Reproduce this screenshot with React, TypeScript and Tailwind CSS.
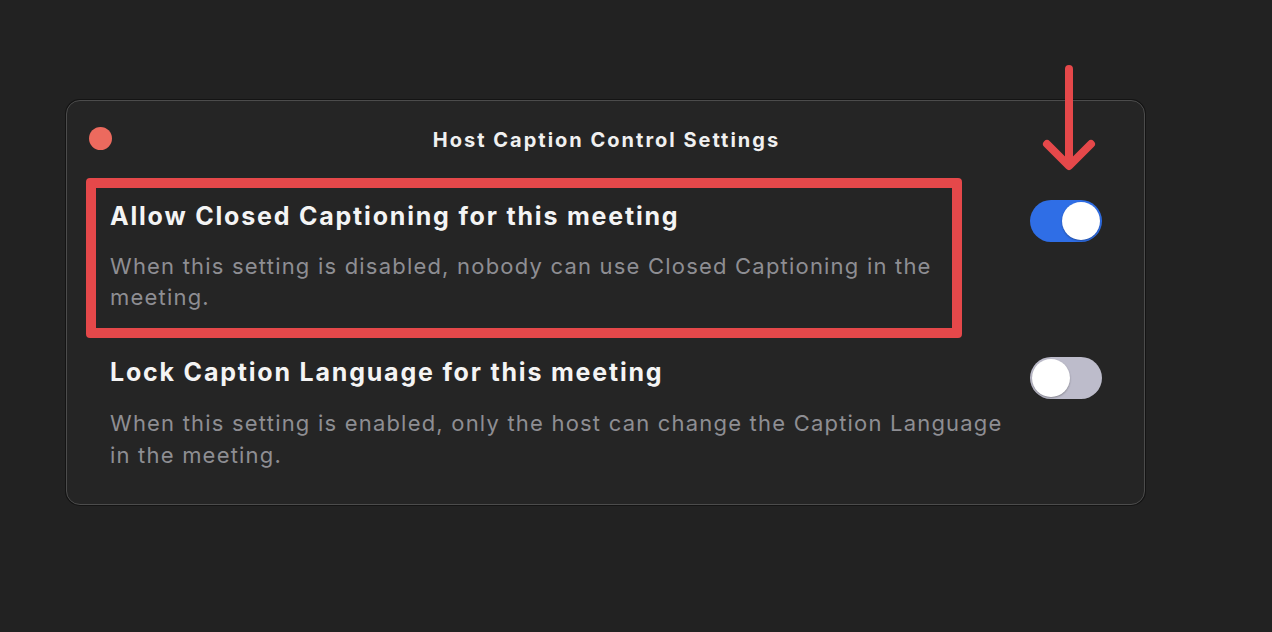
import React from 'react';

const Toggle: React.FC<{ on: boolean }> = ({ on }) => (
  <div
    className={`flex h-[42px] w-[72px] shrink-0 items-center rounded-full px-[2px] ${
      on ? 'justify-end bg-[#2f6ee6]' : 'justify-start bg-[#bdbccb]'
    }`}
  >
    <div className="h-[38px] w-[38px] rounded-full bg-white shadow-[0_1px_2px_rgba(0,0,0,0.3)]" />
  </div>
);

const App: React.FC = () => {
  return (
    <div
      className="relative h-[632px] w-[1272px] overflow-hidden bg-[#222222] pl-[66px] pt-[100px]"
      style={{ fontFamily: 'Inter, "Noto Sans", sans-serif' }}
    >
      {/* Settings panel */}
      <div className="h-[405px] w-[1079px] rounded-[14px] border border-[#4c4c4c] bg-[#252525] pl-[19px] pr-[42px] pt-[27px] shadow-[0_0_0_1px_#141414]">
        <div className="relative -mr-[23px] flex h-[23px] items-center justify-center">
          <div className="absolute left-[3px] -top-px h-[23px] w-[23px] rounded-full bg-[#ec6a5e]" />
          <span className="pl-[2px] text-[20px] font-bold tracking-[2px] text-[#f0f0f0]">Host Caption Control Settings</span>
        </div>

        <div className="mt-[27px] flex items-start justify-between">
          <div className="w-[876px] rounded-[4px] border-[10px] border-[#e5484a] pb-[15px] pl-[14px] pr-[10px] pt-[13px]">
            <div className="text-[25px] font-bold leading-[30px] tracking-[1.8px] text-[#f4f4f4]">
              Allow Closed Captioning for this meeting
            </div>
            <div className="mt-[20px] text-[22px] leading-[31px] tracking-[1.2px] text-[#8e8e93]">
              When this setting is disabled, nobody can use Closed Captioning in the meeting.
            </div>
          </div>
          <div className="mt-[22px]">
            <Toggle on />
          </div>
        </div>

        <div className="mt-[19px] flex items-start justify-between">
          <div className="w-[925px] pl-[24px]">
            <div className="text-[25px] font-bold leading-[30px] tracking-[1.8px] text-[#f4f4f4]">
              Lock Caption Language for this meeting
            </div>
            <div className="mt-[20px] text-[22px] leading-[32px] tracking-[1.2px] text-[#8e8e93]">
              When this setting is enabled, only the host can change the Caption Language in the meeting.
            </div>
          </div>
          <div>
            <Toggle on={false} />
          </div>
        </div>
      </div>

      {/* Annotation arrow */}
      <svg className="absolute left-[1040px] top-[60px]" width="60" height="115" viewBox="0 0 60 115">
        <path
          d="M29 9 L29 104 M7 84 L29 106 L51 84"
          fill="none"
          stroke="#e5484a"
          strokeWidth="8"
          strokeLinecap="round"
          strokeLinejoin="round"
        />
      </svg>
    </div>
  );
};

export default App;
